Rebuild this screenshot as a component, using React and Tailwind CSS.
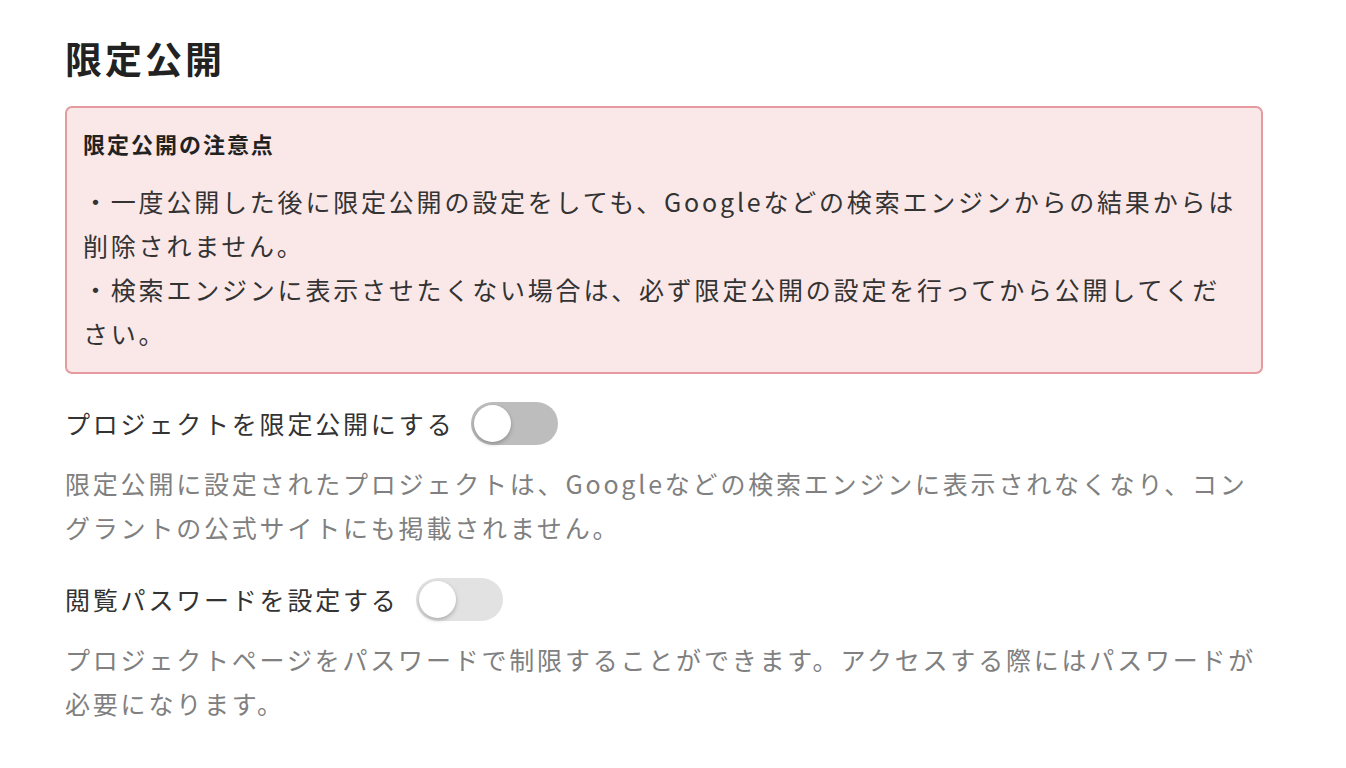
const font = { fontFamily: '"Noto Sans CJK JP", "Noto Sans", sans-serif' };

const Toggle = ({ track }) => (
  <div className={`relative w-[87px] h-[43px] rounded-full ${track}`}>
    <div className="absolute left-[3px] top-[3px] w-[37px] h-[37px] rounded-full bg-white shadow-[0_2px_4px_rgba(0,0,0,0.25)]"></div>
  </div>
);

export default function App() {
  return (
    <div className="min-h-screen bg-white text-[#333]" style={font}>
      <div className="w-[1198px] ml-[65px] pt-[34px]">
        <h2 className="text-[37px] leading-[48px] font-bold tracking-[0.08em] text-[#222]">限定公開</h2>

        <div className="mt-[24px] rounded-[7px] border-2 border-[#e49a9e] bg-[#fae8e9] px-[16px] pt-[18px] pb-[17px]">
          <h3 className="text-[22px] leading-[34px] font-bold tracking-[0.09em] text-[#222]">限定公開の注意点</h3>
          <p className="mt-[19px] text-[25px] leading-[44px] tracking-[2.8px] text-[#333]">
            ・一度公開した後に限定公開の設定をしても、Googleなどの検索エンジンからの結果からは削除されません。
            <br />
            ・検索エンジンに表示させたくない場合は、必ず限定公開の設定を行ってから公開してください。
          </p>
        </div>

        <div className="mt-[27px] flex items-center gap-[17px]">
          <span className="text-[25px] leading-[44px] tracking-[2.8px]">プロジェクトを限定公開にする</span>
          <Toggle track="bg-[#bdbdbd]" />
        </div>
        <p className="mt-[16px] text-[25px] leading-[44px] tracking-[2.8px] text-[#808080]">
          限定公開に設定されたプロジェクトは、Googleなどの検索エンジンに表示されなくなり、コングラントの公式サイトにも掲載されません。
        </p>

        <div className="mt-[28px] flex items-center gap-[17px]">
          <span className="text-[25px] leading-[44px] tracking-[2.8px]">閲覧パスワードを設定する</span>
          <Toggle track="bg-[#e2e2e2]" />
        </div>
        <p className="mt-[16px] text-[25px] leading-[44px] tracking-[2.8px] text-[#808080]">
          プロジェクトページをパスワードで制限することができます。アクセスする際にはパスワードが必要になります。
        </p>
      </div>
    </div>
  );
}
